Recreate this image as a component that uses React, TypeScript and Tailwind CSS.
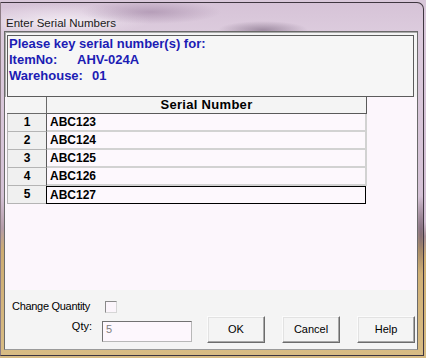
const serials = ["ABC123", "ABC124", "ABC125", "ABC126", "ABC127"];

function Button({ label }: { label: string }) {
  return (
    <button
      type="button"
      className="w-[58px] h-[27px] bg-[#f4f4f4] border border-t-[#fbfbfb] border-l-[#fbfbfb] border-b-[#6c6c6c] border-r-[#6c6c6c] shadow-[inset_-1px_-1px_0_#a8a8a8,inset_1px_1px_0_#e2e2e2] text-[11px] leading-none text-black"
    >
      {label}
    </button>
  );
}

export default function App() {
  return (
    <div className="w-[426px] h-[358px] overflow-hidden bg-[#d2bc90] bg-[image:linear-gradient(180deg,#d9c8da_0%,#d3c0d4_62%,#a99098_66%,#cfae74_72%,#d6bb84_100%)] font-['Liberation_Sans',Arial,sans-serif]">
      <div className="mt-[2px] w-[424px] h-[354px] flex flex-col border border-[#3f3640] border-l-[#8c7c84] rounded-tr-[7px] bg-[#d2bc90] bg-[image:radial-gradient(ellipse_70px_12px_at_150px_9px,rgba(140,110,145,0.45),transparent),radial-gradient(ellipse_45px_9px_at_262px_27px,rgba(110,90,115,0.55),transparent),radial-gradient(ellipse_90px_16px_at_60px_17px,rgba(245,238,246,0.8),transparent),radial-gradient(ellipse_6px_40px_at_420px_232px,rgba(90,70,90,0.6),transparent),linear-gradient(180deg,#d6c3d7_0%,#dccbdd_8%,#d4c1d5_55%,#b49ca8_64%,#cdac72_70%,#d8bc84_100%)]">
        {/* title bar */}
        <div className="h-[28px] shrink-0 pl-[5px] pt-[7px]">
          <span className="text-[11.5px] leading-[14px] text-[#1a1a1a] [text-shadow:0_0_6px_rgba(255,255,255,0.9)]">
            Enter Serial Numbers
          </span>
        </div>

        <div className="flex pl-[3px]">
          {/* client */}
          <div className="w-[414px] h-[319px] border border-[#6a6a6a] border-b-[#9a9a9a] flex flex-col">
            {/* info panel */}
            <div className="h-[65px] shrink-0 bg-[#f4f4f4] border-t border-l border-[#aaaaaa] pt-[2px] pl-[1px]">
              <div className="w-[407px] h-[62px] border border-[#5c5c5c] bg-[#f6f6f6] pl-[1px] text-[13px] font-bold leading-[16px] text-[#1c1cb4]">
                <div>Please key serial number(s) for:</div>
                <div>
                  <span className="inline-block w-[68px]">ItemNo:</span>
                  AHV-024A
                </div>
                <div>
                  <span className="inline-block w-[83px]">Warehouse:</span>
                  01
                </div>
              </div>
            </div>

            {/* grid */}
            <div className="h-[193px] shrink-0 bg-[#fcf6fc] pl-[2px]">
              <div className="flex h-[17px]">
                <div className="w-[40px] bg-[#f4f4f4] border-b border-r border-[#6a6a6a]" />
                <div className="w-[320px] bg-[#f4f4f4] border-b border-r border-[#5a5a5a] text-center text-[13px] font-bold leading-[16px] tracking-[0.3px] text-black">
                  Serial Number
                </div>
              </div>
              {serials.map((s, i) => {
                const last = i === serials.length - 1;
                return (
                  <div key={s} className="flex h-[18px]">
                    <div className="w-[40px] bg-[#f0f0f0] border-l border-b border-[#b4b4b4] border-r border-r-[#5a5a5a] text-center text-[12px] font-bold leading-[17px] text-black">
                      {i + 1}
                    </div>
                    {last ? (
                      <div className="w-[320px] -ml-[1px] bg-[#fdf8fd] border border-black pl-[3px] text-[12px] font-bold leading-[16px] text-black">
                        {s}
                      </div>
                    ) : (
                      <div className="w-[320px] bg-[#fdf8fd] border-b-2 border-r-2 border-[#d2d2d2] pl-[3px] text-[12px] font-bold leading-[16px] text-black">
                        {s}
                      </div>
                    )}
                  </div>
                );
              })}
            </div>

            {/* bottom bar */}
            <div className="flex-1 bg-[#f4f4f4] flex">
              <div className="w-[202px] flex flex-col pt-[10px] text-[11px] leading-none text-black">
                <div className="flex items-center h-[13px] pl-[7px]">
                  <span className="w-[93px] tracking-[-0.3px]">Change Quantity</span>
                  <span className="w-[12px] h-[12px] bg-[#fbf5fb] border border-[#8a8a8a] border-b-[#d6d6d6] border-r-[#d6d6d6]" />
                </div>
                <div className="flex mt-[8px]">
                  <span className="w-[97px] pr-[10px] text-right">Qty:</span>
                  <div className="w-[90px] h-[21px] bg-[#fdf7fd] border border-[#727272] border-b-[#b8b8b8] border-r-[#b8b8b8] pl-[3px] pt-[2px] text-[#808080]">
                    5
                  </div>
                </div>
              </div>
              <div className="flex gap-[17px] pt-[26px]">
                <Button label="OK" />
                <Button label="Cancel" />
                <Button label="Help" />
              </div>
            </div>
          </div>
        </div>
      </div>
    </div>
  );
}
